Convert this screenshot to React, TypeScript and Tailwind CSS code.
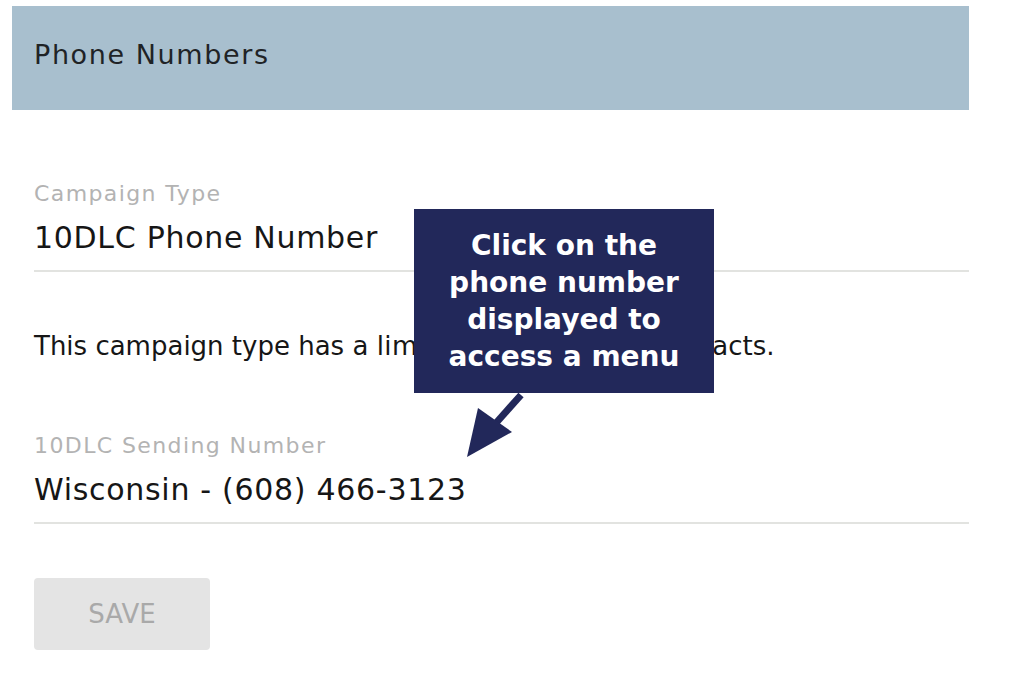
import React from 'react';

const font = { fontFamily: '"DejaVu Sans", sans-serif' };

const Field = ({ label, value }: { label: string; value: string }) => (
  <div className="border-b-2 border-[#e2e3e0] pb-[12px]">
    <div className="text-[22px] leading-[28px] tracking-[1.4px] text-[#b3b3b3]">{label}</div>
    <div className="mt-[10px] text-[30px] leading-[40px] tracking-[0.7px] text-[#161616]">{value}</div>
  </div>
);

export default function App() {
  return (
    <div className="relative h-[686px] w-[1030px] bg-white pt-[6px]" style={font}>
      {/* header */}
      <div className="ml-[12px] flex h-[104px] w-[957px] items-start bg-[#a8bfce] px-[22px] pt-[34px]">
        <h1 className="text-[27px] leading-[30px] tracking-[1.6px] text-[#1f2326]">Phone Numbers</h1>
      </div>

      <div className="ml-[34px] mr-[61px] pt-[70px]">
        <Field label="Campaign Type" value="10DLC Phone Number" />

        <p className="mt-[56px] text-[26px] leading-[36px] text-[#161616]">
          This campaign type has a <span className="tracking-[0.5px]">limit of 10,000 total cont</span>acts.
        </p>

        <div className="mt-[68px]">
          <Field label="10DLC Sending Number" value="Wisconsin - (608) 466-3123" />
        </div>

        <button className="mt-[54px] h-[72px] w-[176px] rounded-[4px] bg-[#e4e4e4] text-[26px] text-[#a9a9a9]">
          SAVE
        </button>
      </div>

      {/* callout */}
      <div className="absolute left-[414px] top-[209px] flex h-[184px] w-[300px] items-center justify-center bg-[#22285a]">
        <p className="text-center text-[28px] font-bold leading-[37px] text-white">
          Click on the
          <br />
          phone number
          <br />
          displayed to
          <br />
          access a menu
        </p>
      </div>
      <svg className="absolute left-[460px] top-[390px]" width="70" height="72" viewBox="0 0 70 72">
        <line x1="61" y1="5" x2="36" y2="33" stroke="#22285a" strokeWidth="7" />
        <polygon points="7,67 18,18 52,42" fill="#22285a" />
      </svg>
    </div>
  );
}
